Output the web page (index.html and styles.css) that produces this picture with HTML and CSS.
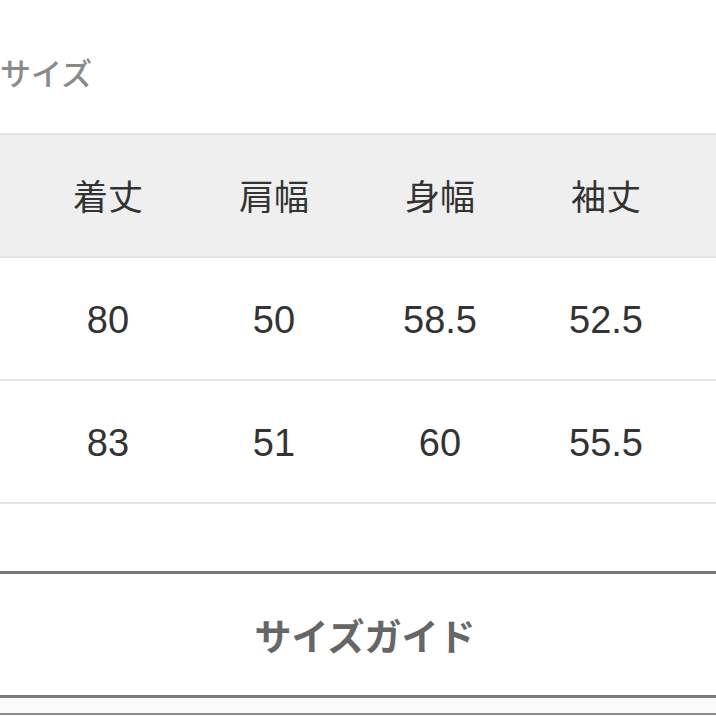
FILE: index.html
```html
<!DOCTYPE html>
<html lang="ja">
<head>
<meta charset="utf-8">
<link rel="stylesheet" href="styles.css">
</head>
<body>
<div class="page">
  <h2 class="title">サイズ</h2>
  <div class="size-table">
    <div class="row head">
      <div class="cell label"></div>
      <div class="cell">着丈</div>
      <div class="cell">肩幅</div>
      <div class="cell">身幅</div>
      <div class="cell">袖丈</div>
      <div class="cell rest"></div>
    </div>
    <div class="row">
      <div class="cell label"></div>
      <div class="cell num">80</div>
      <div class="cell num">50</div>
      <div class="cell num">58.5</div>
      <div class="cell num">52.5</div>
      <div class="cell rest"></div>
    </div>
    <div class="row">
      <div class="cell label"></div>
      <div class="cell num">83</div>
      <div class="cell num">51</div>
      <div class="cell num">60</div>
      <div class="cell num">55.5</div>
      <div class="cell rest"></div>
    </div>
  </div>
  <div class="guide-wrap">
    <button class="guide">サイズガイド</button>
  </div>
  <div class="next"></div>
</div>
</body>
</html>
```

FILE: styles.css
```css
html, body {
  margin: 0;
  padding: 0;
  background: #ffffff;
  overflow: hidden;
}

.page {
  width: 716px;
  height: 716px;
  overflow: hidden;
  font-family: "Noto Sans CJK JP", sans-serif;
}

.title {
  margin: 0;
  padding-top: 51px;
  height: 133px;
  box-sizing: border-box;
  font-size: 31px;
  line-height: 42px;
  font-weight: 500;
  color: #8a8a8a;
}

.size-table {
  border-top: 2px solid #e3e3e3;
}

.row {
  display: grid;
  grid-template-columns: 25px 166px 166px 166px 166px 1fr;
  height: 123px;
  border-bottom: 2px solid #e6e6e6;
  box-sizing: border-box;
}

.row.head {
  background: #efefef;
}

.cell {
  display: flex;
  align-items: center;
  justify-content: center;
  padding-bottom: 2px;
  font-size: 35px;
  color: #333333;
}

.cell.num {
  font-family: "Liberation Sans", Arial, sans-serif;
  font-size: 38px;
  padding-bottom: 0;
  padding-top: 4px;
}

.guide-wrap {
  margin-top: 67px;
  margin-left: -100px;
  width: 930px;
}

.guide {
  display: flex;
  align-items: center;
  justify-content: center;
  width: 100%;
  height: 127px;
  padding: 0;
  background: #ffffff;
  border: none;
  border-top: 3px solid #7a7a7a;
  border-bottom: 3px solid #7a7a7a;
  font-family: "Noto Sans CJK JP", sans-serif;
  font-size: 37px;
  font-weight: 700;
  color: #666666;
}

.next {
  height: 15px;
  background: #fafafa;
  border-bottom: 2px solid #8a8a8a;
}
```
